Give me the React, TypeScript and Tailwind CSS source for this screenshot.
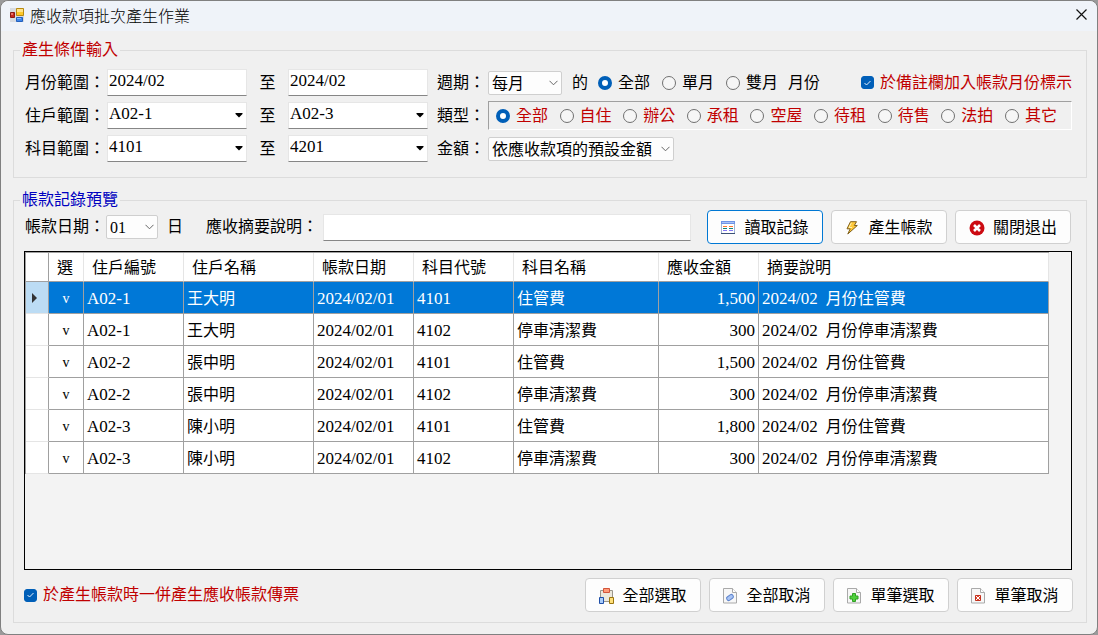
import { useState } from "react";
import type { ReactNode } from "react";

const kinds = ["全部", "自住", "辦公", "承租", "空屋", "待租", "待售", "法拍", "其它"];

const columns = [
  { name: "選", width: "w-[35px]" },
  { name: "住戶編號", width: "w-[100px]" },
  { name: "住戶名稱", width: "w-[130px]" },
  { name: "帳款日期", width: "w-[100px]" },
  { name: "科目代號", width: "w-[100px]" },
  { name: "科目名稱", width: "w-[145px]" },
  { name: "應收金額", width: "w-[100px]" },
  { name: "摘要說明", width: "" },
];

const records = [
  { unit: "A02-1", owner: "王大明", code: "4101", subject: "住管費", amount: "1,500" },
  { unit: "A02-1", owner: "王大明", code: "4102", subject: "停車清潔費", amount: "300" },
  { unit: "A02-2", owner: "張中明", code: "4101", subject: "住管費", amount: "1,500" },
  { unit: "A02-2", owner: "張中明", code: "4102", subject: "停車清潔費", amount: "300" },
  { unit: "A02-3", owner: "陳小明", code: "4101", subject: "住管費", amount: "1,800" },
  { unit: "A02-3", owner: "陳小明", code: "4102", subject: "停車清潔費", amount: "300" },
];

const fieldClass =
  "h-[27px] min-w-0 border border-[#e6e6e6] border-b-[#868686] bg-white px-px pb-1 text-[17px] leading-5 outline-none";
const cellClass = "h-8 border-r border-b border-[#a0a0a0] px-[3px] pt-0.5";

/* Icons */
function AppIcon() {
  return (
    <svg width="14" height="14" viewBox="0 0 14 14" aria-hidden="true">
      <path d="M0 0h14v14H0z" fill="#d8dbe0" />
      <path d="M6.5 .5h7v7h-7z" fill="#ffc928" stroke="#b88a10" />
      <path d="M7 1h6v3H7z" fill="#ffe38a" />
      <path d="M.5 4.5h4v5h-4z" fill="#c8281e" stroke="#8c1a14" />
      <path d="M1 5h2v2H1z" fill="#e87468" />
      <path d="M6.5 9.5h6v4h-6z" fill="#3f86ea" stroke="#2260bd" />
      <path d="M7 10h4v1H7z" fill="#8fbcf8" />
    </svg>
  );
}

function ListIcon() {
  return (
    <svg width="15" height="14" viewBox="0 0 15 14" aria-hidden="true">
      <path d="M.5 .5h13v12H.5z" fill="#fff" stroke="#9fb4d4" />
      <path d="M0 0h14v3H0z" fill="#6f94e6" />
      <path d="M1 1h12v1H1z" fill="#a9c2f7" />
      <path d="M0 12h14v1H0z" fill="#3a5077" />
      <path d="M2 5h4v1H2zM8 5h4v1H8z" fill="#ff7830" />
      <path d="M2 7h4v1H2zM8 7h4v1H8z" fill="#12857a" />
      <path d="M2 9h4v1H2zM8 9h4v1H8z" fill="#8478f5" />
    </svg>
  );
}

function BoltIcon() {
  return (
    <svg width="15" height="14" viewBox="0 0 15 14" aria-hidden="true">
      <path
        d="M5.500 .7h6L9.300 4.500h3L2.800 13l2.400-5.200H2z"
        fill="#ffc93a"
        stroke="#80601c"
        strokeLinejoin="round"
      />
      <path d="M6.500 1.700 4 6.500h3" fill="none" stroke="#fff2b0" />
    </svg>
  );
}

function StopIcon() {
  return (
    <svg width="16" height="16" viewBox="0 0 16 16" aria-hidden="true">
      <circle cx="8" cy="8" r="7.500" fill="#cc0b12" />
      <path d="m5 5 6 6M11 5l-6 6" stroke="#fff" strokeWidth="2.600" />
    </svg>
  );
}

function ClipboardIcon() {
  return (
    <svg width="15" height="16" viewBox="0 0 15 16" aria-hidden="true">
      <path d="M1.500 2.500h12v11h-12z" fill="#ece8dc" stroke="#9a968c" />
      <path d="M4.500 .5h6v4h-6z" fill="#ff9a78" stroke="#d2553a" />
      <path d="M.5 9.500h4v6h-4z" fill="#a9ccfb" stroke="#1f4fa8" />
      <path d="M10.500 9.500h4v6h-4z" fill="#ffe07a" stroke="#9a7410" />
    </svg>
  );
}

function PageIcon({ children }: { children: ReactNode }) {
  return (
    <svg width="15" height="16" viewBox="0 0 15 16" aria-hidden="true">
      <path d="M.5 .5h9l4 4v10.500H.5z" fill="#f7f7f7" stroke="#a9a9a9" />
      <path d="M9.500 .5v4h4" fill="#fff" stroke="#a9a9a9" />
      {children}
    </svg>
  );
}

/* Controls */
function DropDown({ id, option, width }: { id: string; option: string; width: string }) {
  return (
    <div className={`grid items-center ${width}`}>
      <select
        id={id}
        className="col-start-1 row-start-1 h-6 w-full appearance-none rounded-xs border border-[#cfcfcf] bg-[#fdfdfd] pt-0.5 pl-[3px] outline-none"
      >
        <option>{option}</option>
      </select>
      <svg
        className="pointer-events-none col-start-1 row-start-1 mr-1 justify-self-end"
        width="9"
        height="6"
        viewBox="0 0 9 6"
        aria-hidden="true"
      >
        <path d="m.5 .8 4 4 4-4" fill="none" stroke="#666" />
      </svg>
    </div>
  );
}

function Combo({ id, label, value }: { id: string; label?: string; value: string }) {
  return (
    <div className="grid w-[140px] items-center">
      <select id={id} aria-label={label} className={`${fieldClass} col-start-1 row-start-1 w-full appearance-none`}>
        <option>{value}</option>
      </select>
      <svg
        className="pointer-events-none col-start-1 row-start-1 mr-1 justify-self-end"
        width="8"
        height="5"
        viewBox="0 0 8 5"
        aria-hidden="true"
      >
        <path d="M.5 0h7v1L4 4.500.5 1z" />
      </svg>
    </div>
  );
}

function Radio({ name, label, checked, onPick }: { name: string; label: string; checked: boolean; onPick: () => void }) {
  return (
    <label className="flex items-center gap-[6px]">
      <input
        type="radio"
        name={name}
        value={label}
        checked={checked}
        onChange={onPick}
        className="size-[14px] appearance-none rounded-full border border-[#707070] bg-[#f6f6f6] checked:border-4 checked:border-[#005fb8] checked:bg-white"
      />
      {label}
    </label>
  );
}

function CheckBox({ children }: { children: ReactNode }) {
  const [checked, setChecked] = useState(true);
  return (
    <label className="flex items-center gap-[6px] text-[#c00000]">
      <span className="grid items-center justify-items-center">
        <input
          type="checkbox"
          checked={checked}
          onChange={() => setChecked(!checked)}
          className="col-start-1 row-start-1 size-[13px] appearance-none rounded-[3px] border border-[#707070] bg-white checked:border-[#005fb8] checked:bg-[#005fb8]"
        />
        {checked && (
          <svg className="pointer-events-none col-start-1 row-start-1" width="7" height="6" viewBox="0 0 7 6" aria-hidden="true">
            <path d="m.5 3 2 2 4-4" fill="none" stroke="#e4f0fb" />
          </svg>
        )}
      </span>
      {children}
    </label>
  );
}

function ActionButton({ icon, primary, children }: { icon: ReactNode; primary?: boolean; children: ReactNode }) {
  return (
    <button
      type="button"
      className={`flex h-[34px] w-[116px] shrink-0 items-center justify-center gap-2 rounded border bg-[#fdfdfd] pt-0.5 ${
        primary ? "border-[#0078d4]" : "border-[#d0d0d0]"
      }`}
    >
      {icon}
      {children}
    </button>
  );
}

export default function App() {
  const [cycle, setCycle] = useState("全部");
  const [kind, setKind] = useState("全部");
  const [selected, setSelected] = useState(0);

  return (
    <div className="flex min-h-screen flex-col bg-[#9a9a9a] font-['Liberation_Serif','Noto_Sans_CJK_TC',serif] text-base leading-[18px] text-black">
      <div className="flex flex-1 flex-col rounded-lg border border-[#808080] bg-[#f0f0f0]">
        {/* Title bar */}
        <header className="flex h-[30px] items-center gap-[6px] rounded-t-lg bg-[#eff3f9] pr-[10px] pb-[3px] pl-[9px]">
          <AppIcon />
          <h1 className="flex-1 font-['Noto_Sans_CJK_TC',sans-serif] font-light">應收款項批次產生作業</h1>
          <button type="button" aria-label="關閉">
            <svg width="11" height="11" viewBox="0 0 11 11" aria-hidden="true">
              <path d="m.5 .5 10 10M10.500 .5l-10 10" stroke="#111" strokeWidth="1.200" />
            </svg>
          </button>
        </header>

        <main className="flex flex-1 flex-col gap-[13px] pt-[10px] pr-[10px] pb-[11px] pl-3">
          {/* Conditions */}
          <fieldset className="border border-[#dcdcdc] px-[6px] pb-3">
            <legend className="px-0.5 text-[#c00000]">產生條件輸入</legend>
            <div className="flex gap-[9px] pt-[7px] pr-2 pl-1">
              <div className="grid auto-rows-[33px] grid-cols-[83px_140px_41px_140px] items-center">
                <label htmlFor="month-from" className="pl-px">月份範圍：</label>
                <input id="month-from" defaultValue="2024/02" className={fieldClass} />
                <span className="text-center">至</span>
                <input aria-label="月份範圍迄" defaultValue="2024/02" className={fieldClass} />

                <label htmlFor="unit-from" className="pl-px">住戶範圍：</label>
                <Combo id="unit-from" value="A02-1" />
                <span className="text-center">至</span>
                <Combo id="unit-to" label="住戶範圍迄" value="A02-3" />

                <label htmlFor="subject-from" className="pl-px">科目範圍：</label>
                <Combo id="subject-from" value="4101" />
                <span className="text-center">至</span>
                <Combo id="subject-to" label="科目範圍迄" value="4201" />
              </div>

              <div className="grid flex-1 auto-rows-[33px] grid-cols-[51px_1fr] items-center">
                <label htmlFor="cycle">週期：</label>
                <div className="flex items-center">
                  <DropDown id="cycle" option="每月" width="w-[74px]" />
                  <span className="px-[10px]">的</span>
                  <div className="flex gap-3">
                    {["全部", "單月", "雙月"].map((item) => (
                      <Radio
                        key={item}
                        name="cycle-months"
                        label={item}
                        checked={cycle === item}
                        onPick={() => setCycle(item)}
                      />
                    ))}
                  </div>
                  <span className="flex-1 pl-[10px]">月份</span>
                  <CheckBox>於備註欄加入帳款月份標示</CheckBox>
                </div>

                <span>類型：</span>
                <div
                  role="radiogroup"
                  aria-label="類型"
                  className="flex h-[29px] items-center justify-between border border-white border-t-[#a0a0a0] border-l-[#a0a0a0] pr-[14px] pl-[7px] text-[#c00000]"
                >
                  {kinds.map((item) => (
                    <Radio
                      key={item}
                      name="kind"
                      label={item}
                      checked={kind === item}
                      onPick={() => setKind(item)}
                    />
                  ))}
                </div>

                <label htmlFor="amount">金額：</label>
                <DropDown id="amount" option="依應收款項的預設金額" width="w-[186px]" />
              </div>
            </div>
          </fieldset>

          {/* Preview */}
          <fieldset className="flex-1 border border-[#dcdcdc] px-[6px] pb-[10px]">
            <legend className="px-0.5 text-[#0000c0]">帳款記錄預覽</legend>
            <div className="flex items-center pt-px pr-[9px] pl-1">
              <label htmlFor="day" className="w-[82px] pl-px">帳款日期：</label>
              <DropDown id="day" option="01" width="w-[52px]" />
              <span className="px-[9px]">日</span>
              <label htmlFor="summary" className="pl-[14px]">應收摘要說明：</label>
              <input id="summary" className={`${fieldClass} mr-4 ml-[5px] flex-1`} />
              <div className="flex gap-2">
                <ActionButton primary icon={<ListIcon />}>讀取記錄</ActionButton>
                <ActionButton icon={<BoltIcon />}>產生帳款</ActionButton>
                <ActionButton icon={<StopIcon />}>關閉退出</ActionButton>
              </div>
            </div>

            <div className="mt-[7px] mr-2 ml-1 min-h-[319px] border border-black bg-[#f3f3f3] pr-[22px]">
              <table className="w-full table-fixed border-separate border-spacing-0 border-t border-l border-[#a0a0a0]">
                <thead>
                  <tr className="bg-white">
                    <th className="h-[29px] w-[23px] border-r border-b border-[#a0a0a0]" aria-label="目前列" />
                    {columns.map((column) => (
                      <th
                        key={column.name}
                        className={`h-[29px] border-r border-b border-r-[#e5e5e5] border-b-[#a0a0a0] pt-0.5 pl-2 text-left font-normal ${column.width}`}
                      >
                        {column.name}
                      </th>
                    ))}
                  </tr>
                </thead>
                <tbody>
                  {records.map((record, index) => (
                    <tr
                      key={`${record.unit}-${record.code}`}
                      onClick={() => setSelected(index)}
                      className={index === selected ? "bg-[#0078d7] text-white" : "bg-white"}
                    >
                      <td
                        className={`h-8 border-r border-b border-r-[#a0a0a0] border-b-[#e5e5e5] pl-[5px] ${
                          index === selected ? "bg-[#bcdcf4]" : ""
                        }`}
                      >
                        {index === selected && (
                          <svg width="7" height="10" viewBox="0 0 7 10" aria-hidden="true">
                            <path d="M1 0v10l5-5z" fill="#333" />
                          </svg>
                        )}
                      </td>
                      <td className={`${cellClass} text-center text-sm`}>v</td>
                      <td className={`${cellClass} text-[17px]`}>{record.unit}</td>
                      <td className={cellClass}>{record.owner}</td>
                      <td className={`${cellClass} text-[17px]`}>2024/02/01</td>
                      <td className={`${cellClass} text-[17px]`}>{record.code}</td>
                      <td className={cellClass}>{record.subject}</td>
                      <td className={`${cellClass} text-right text-[17px]`}>{record.amount}</td>
                      <td className={cellClass}>
                        <span className="mr-1 text-[17px]">2024/02</span> 月份{record.subject}
                      </td>
                    </tr>
                  ))}
                </tbody>
              </table>
            </div>

            <div className="mt-2 flex items-center justify-between pr-[7px] pl-1">
              <CheckBox>於產生帳款時一併產生應收帳款傳票</CheckBox>
              <div className="flex gap-2">
                <ActionButton icon={<ClipboardIcon />}>全部選取</ActionButton>
                <ActionButton
                  icon={
                    <PageIcon>
                      <rect
                        x="3.5"
                        y="7.5"
                        width="7"
                        height="4"
                        rx="1.5"
                        transform="rotate(-35 7 9.5)"
                        fill="#a8c4f5"
                        stroke="#5f84cc"
                      />
                    </PageIcon>
                  }
                >
                  全部取消
                </ActionButton>
                <ActionButton
                  icon={
                    <PageIcon>
                      <path d="M5.500 5.500h3v2.500H11v3H8.500v2.500h-3V11H3V8h2.500z" fill="#4fd03c" stroke="#2fa022" />
                    </PageIcon>
                  }
                >
                  單筆選取
                </ActionButton>
                <ActionButton
                  icon={
                    <PageIcon>
                      <path d="M4.500 7.500h5v5h-5z" fill="#e0472f" stroke="#c2301c" />
                      <path d="m5 8 4 4M9 8l-4 4" stroke="#fff" />
                    </PageIcon>
                  }
                >
                  單筆取消
                </ActionButton>
              </div>
            </div>
          </fieldset>
        </main>
      </div>
    </div>
  );
}
